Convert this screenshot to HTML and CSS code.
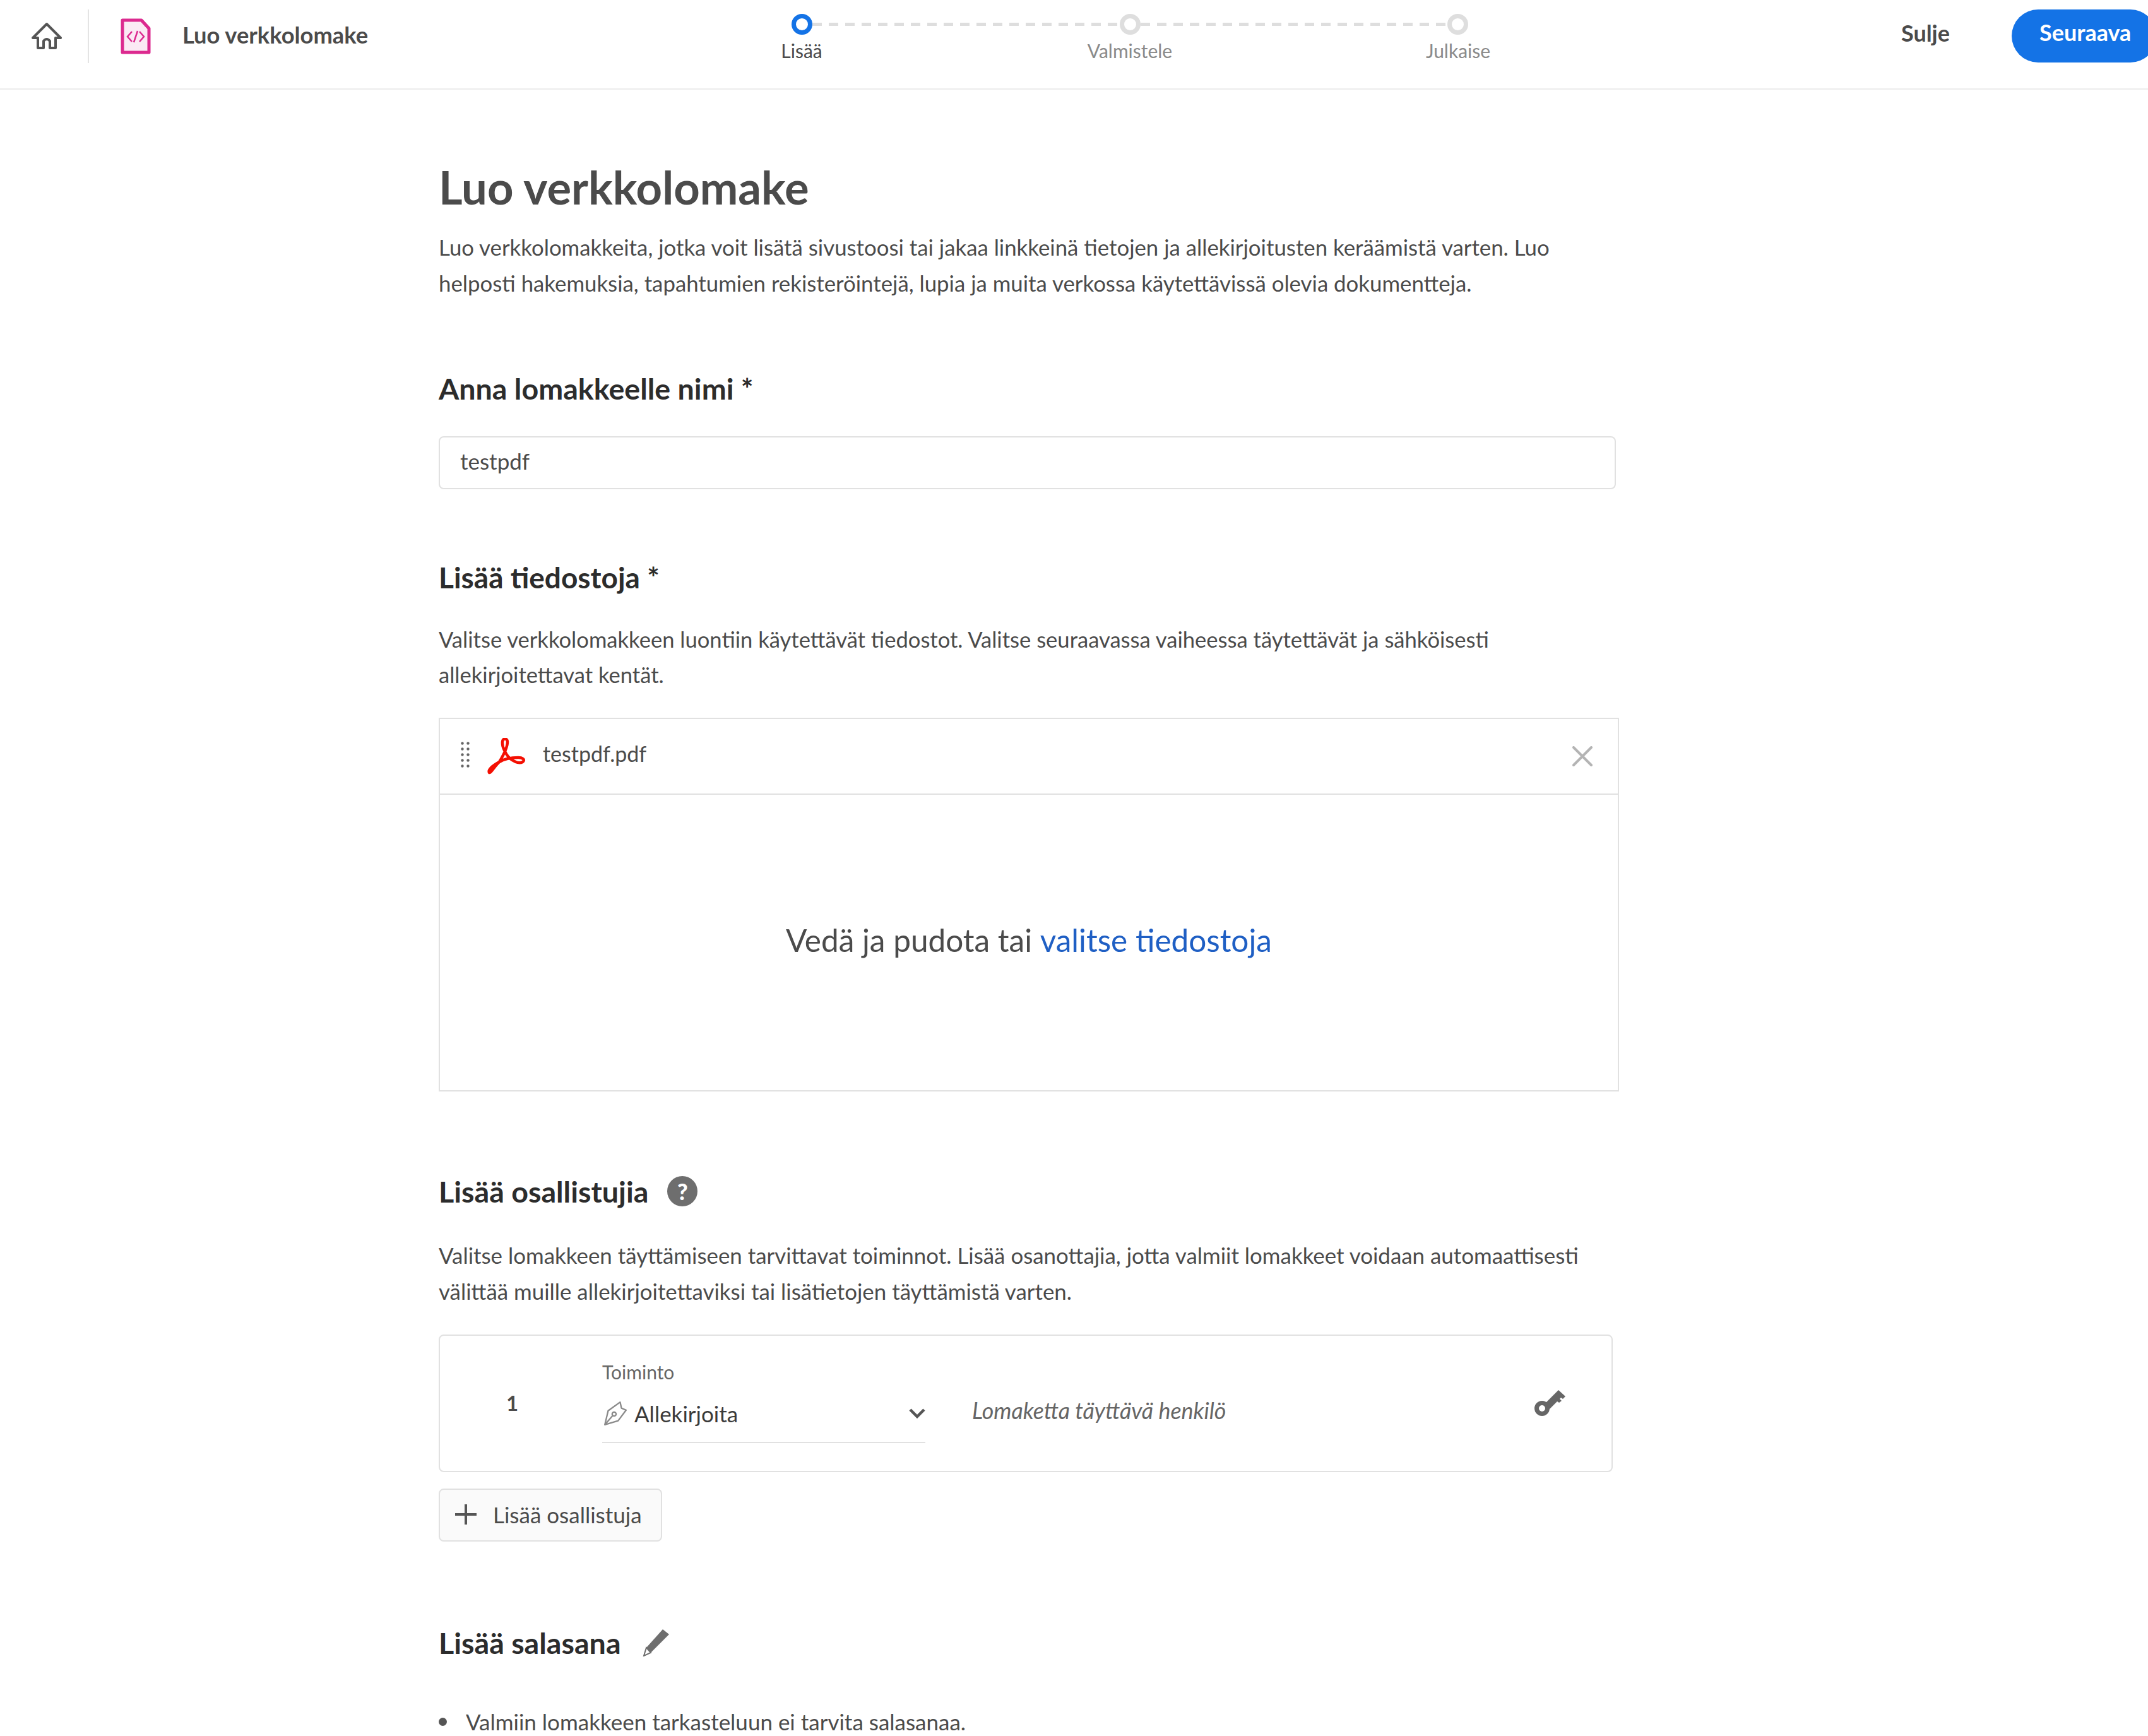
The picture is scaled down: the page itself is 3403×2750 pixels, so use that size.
FILE: index.html
```html
<!DOCTYPE html>
<html lang="fi">

<head>
  <meta charset="UTF-8">
  <title>Luo verkkolomake</title>
  <link rel="stylesheet" href="styles.css">
</head>

<body>
  <header class="topbar">
    <div class="topbar-left">
      <svg class="home-icon" viewBox="0 0 48 44" fill="none" stroke="#555" stroke-width="4" stroke-linejoin="round"><path d="M24 3 L46 25 L38 25 L38 41 L29 41 L29 30 Q24 24 19 30 L19 41 L10 41 L10 25 L2 25 Z"/></svg>
      <span class="divider"></span>
      <svg class="form-icon" viewBox="0 0 48 57"><path d="M3 3 H33 L45 16 V54 H3 Z" fill="#fbeaf4" stroke="#dc2a8f" stroke-width="5" stroke-linejoin="round"/><path d="M18 21 L11 29 L18 37 M30 21 L37 29 L30 37 M27 20 L21 38" fill="none" stroke="#dc2a8f" stroke-width="2.5"/></svg>
      <span class="app-title">Luo verkkolomake</span>
    </div>
    <div class="stepper">
      <div class="track">
        <span class="dot dot-active"></span>
        <span class="dash"></span>
        <span class="dot"></span>
        <span class="dash"></span>
        <span class="dot"></span>
      </div>
      <div class="step-labels">
        <span class="step-label step-current">Lisää</span>
        <span class="step-label">Valmistele</span>
        <span class="step-label">Julkaise</span>
      </div>
    </div>
    <div class="topbar-right">
      <span class="close-link">Sulje</span>
      <button class="next-btn">Seuraava</button>
    </div>
  </header>

  <main class="content">
    <h1>Luo verkkolomake</h1>
    <p class="intro">Luo verkkolomakkeita, jotka voit lisätä sivustoosi tai jakaa linkkeinä tietojen ja allekirjoitusten keräämistä varten. Luo<br>helposti hakemuksia, tapahtumien rekisteröintejä, lupia ja muita verkossa käytettävissä olevia dokumentteja.</p>

    <h2 class="name-title">Anna lomakkeelle nimi *</h2>
    <input class="name-input" type="text" value="testpdf">

    <h2 class="files-title">Lisää tiedostoja *</h2>
    <p class="section-text">Valitse verkkolomakkeen luontiin käytettävät tiedostot. Valitse seuraavassa vaiheessa täytettävät ja sähköisesti<br>allekirjoitettavat kentät.</p>

    <div class="file-box">
      <div class="file-row">
        <svg class="drag-icon" viewBox="0 0 14 42" fill="#666"><circle cx="2.5" cy="2.5" r="2.2"/><circle cx="11.5" cy="2.5" r="2.2"/><circle cx="2.5" cy="11.5" r="2.2"/><circle cx="11.5" cy="11.5" r="2.2"/><circle cx="2.5" cy="20.5" r="2.2"/><circle cx="11.5" cy="20.5" r="2.2"/><circle cx="2.5" cy="29.5" r="2.2"/><circle cx="11.5" cy="29.5" r="2.2"/><circle cx="2.5" cy="38.5" r="2.2"/><circle cx="11.5" cy="38.5" r="2.2"/></svg>
        <svg class="pdf-icon" viewBox="0 0 62 58" fill="none" stroke="#f40f02" stroke-width="4.5" stroke-linejoin="round"><path d="M4 55 C2 50 8 45 20 38 C28 25 33 14 33 6 C33 0 25 0 25 6 C24 14 30 25 36 32 C44 38 52 41 57 38 C62 34 56 31 50 31 C40 31 28 33 20 38 C12 45 7 56 4 55 Z"/></svg>
        <span class="file-name">testpdf.pdf</span>
        <svg class="remove-icon" viewBox="0 0 32 32" stroke="#b4b4b4" stroke-width="4" stroke-linecap="round"><path d="M2 2 L30 30 M30 2 L2 30"/></svg>
      </div>
      <div class="drop-zone">Vedä ja pudota tai <a class="browse-link">valitse tiedostoja</a></div>
    </div>

    <h2 class="people-title">Lisää osallistujia <span class="help-icon">?</span></h2>
    <p class="people-text">Valitse lomakkeen täyttämiseen tarvittavat toiminnot. Lisää osanottajia, jotta valmiit lomakkeet voidaan automaattisesti<br>välittää muille allekirjoitettaviksi tai lisätietojen täyttämistä varten.</p>

    <div class="role-card">
      <span class="role-num">1</span>
      <div class="role-select">
        <label>Toiminto</label>
        <div class="select-value">
          <svg class="pen-icon" viewBox="0 0 38 38" fill="none" stroke="#8a8a8a" stroke-width="2.2" stroke-linejoin="round"><path d="M27 2 L29 11 L36 14 L24 30 L4 36 L9 15 Z"/><path d="M4 36 L16 22"/><circle cx="18" cy="20" r="3"/></svg>
          <span class="select-text">Allekirjoita</span>
          <svg class="chevron" viewBox="0 0 26 16" fill="none" stroke="#555" stroke-width="4.5"><path d="M2 2 L13 13 L24 2"/></svg>
        </div>
      </div>
      <span class="role-placeholder">Lomaketta täyttävä henkilö</span>
      <svg class="key-icon" viewBox="0 0 50 44" fill="#666"><circle cx="12" cy="30" r="8.5" fill="none" stroke="#666" stroke-width="7"/><path d="M17 22 L38 1 L49 11 L45 15 L42 13 L40 15 L43 18 L39 21 L36 19 L24 31 Z"/></svg>
    </div>

    <button class="add-btn"><svg class="plus-icon" viewBox="0 0 34 32" stroke="#555" stroke-width="4"><path d="M0 16 H34 M17 0 V32"/></svg>Lisää osallistuja</button>

    <h2 class="password-title">Lisää salasana
      <svg class="pencil-icon" viewBox="0 0 44 44"><path d="M33 1 L43 9 L14 38 L3 43 L7 30 Z" fill="#6e6e6e"/><path d="M7 30 L3 43 L14 38 Z" fill="#fff" stroke="#6e6e6e" stroke-width="2"/></svg>
    </h2>
    <ul class="password-notes">
      <li>Valmiin lomakkeen tarkasteluun ei tarvita salasanaa.</li>
    </ul>
  </main>
</body>

</html>
```

FILE: styles.css
```css
html,
body {
  margin: 0;
  height: 2750px;
  overflow: hidden;
  background: #fff;
}

body {
  font-family: Lato, "Noto Sans", sans-serif;
  color: #4b4b4b;
}

.topbar {
  display: flex;
  height: 140px;
  border-bottom: 2px solid #ececec;
}

.topbar-left {
  width: 1010px;
  display: flex;
  align-items: center;
  padding-bottom: 26px;
  box-sizing: border-box;
}

.home-icon {
  width: 48px;
  height: 44px;
  margin-left: 50px;
  flex: none;
}

.divider {
  width: 2px;
  height: 85px;
  background: #e4e4e4;
  margin-left: 41px;
}

.form-icon {
  width: 48px;
  height: 57px;
  margin-left: 50px;
}

.app-title {
  font-size: 36.3px;
  font-weight: 700;
  margin: -5px 0 0 50px;
}

.stepper {
  width: 1560px;
  padding-top: 22px;
}

.track {
  display: flex;
  align-items: center;
  margin: 0 244px;
}

.dot {
  width: 33px;
  height: 33px;
  border: 7px solid #dedede;
  border-radius: 50%;
  box-sizing: border-box;
  flex: none;
}

.dot-active {
  border-color: #1473e6;
}

.dash {
  flex: 1;
  height: 5px;
  background: repeating-linear-gradient(90deg, #dedede 0 15px, transparent 15px 26px);
}

.step-labels {
  display: grid;
  grid-template-columns: repeat(3, 1fr);
  margin-top: 7px;
}

.step-label {
  text-align: center;
  font-size: 30px;
  line-height: 36px;
  color: #8a8a8a;
}

.step-current {
  color: #4b4b4b;
}

.topbar-right {
  flex: 1;
  display: flex;
  align-items: flex-start;
  justify-content: flex-end;
  margin-right: -14px;
}

.close-link {
  font-size: 36px;
  font-weight: 700;
  margin: 30px 98px 0 0;
}

.next-btn {
  width: 230px;
  height: 84px;
  margin-top: 15px;
  border: none;
  border-radius: 42px;
  background: #1473e6;
  color: #fff;
  font-family: inherit;
  font-size: 36px;
  font-weight: 700;
  padding: 0 30px 12px 44px;
  text-align: left;
}

.content {
  margin-left: 695px;
  width: 1870px;
}

h1 {
  font-size: 72.4px;
  font-weight: 700;
  line-height: 80px;
  margin: 114px 0 0;
}

p {
  margin: 0;
  font-size: 34.8px;
  line-height: 56.5px;
}

.intro {
  margin-top: 28px;
}

h2 {
  margin: 0;
  font-size: 46.6px;
  font-weight: 700;
  line-height: 56px;
  color: #2c2c2c;
  display: flex;
  align-items: center;
}

.name-title {
  margin-top: 110px;
}

.name-input {
  display: block;
  width: 1865px;
  height: 84px;
  box-sizing: border-box;
  margin-top: 48px;
  padding: 0 32px 6px;
  border: 2px solid #e1e1e1;
  border-radius: 8px;
  font-family: inherit;
  font-size: 35px;
  color: #4b4b4b;
}

.files-title {
  margin-top: 112px;
  font-size: 46px;
}

.section-text {
  margin-top: 41.5px;
  font-size: 34.6px;
}

.file-box {
  width: 1870px;
  height: 592px;
  box-sizing: border-box;
  margin-top: 39px;
  border: 2px solid #e1e1e1;
  display: flex;
  flex-direction: column;
}

.file-row {
  height: 120px;
  flex: none;
  display: flex;
  align-items: center;
  border-bottom: 2px solid #e1e1e1;
  box-sizing: border-box;
  padding: 0 40px 0 33px;
}

.drag-icon {
  width: 14px;
  height: 42px;
  margin-top: -4px;
}

.pdf-icon {
  width: 62px;
  height: 58px;
  margin-left: 27px;
}

.file-name {
  font-size: 34px;
  margin: -8px 0 0 27px;
}

.remove-icon {
  width: 32px;
  height: 32px;
  margin-left: auto;
}

.drop-zone {
  flex: 1;
  display: flex;
  align-items: center;
  justify-content: center;
  white-space: pre;
  font-size: 49.5px;
  padding-bottom: 8px;
}

.browse-link {
  color: #1f5fc4;
}

.people-title {
  margin-top: 130px;
}

.people-text {
  margin-top: 46.5px;
  font-size: 34.9px;
}

.help-icon {
  width: 48px;
  height: 48px;
  margin-left: 30px;
  border-radius: 50%;
  background: #6e6e6e;
  color: #fff;
  font-size: 36px;
  font-weight: 900;
  line-height: 48px;
  text-align: center;
}

.role-card {
  width: 1860px;
  height: 218px;
  box-sizing: border-box;
  margin-top: 40px;
  border: 2px solid #e1e1e1;
  border-radius: 8px;
  display: flex;
  align-items: center;
}

.role-num {
  width: 257px;
  padding: 0 0 3px 105px;
  box-sizing: border-box;
  font-size: 33px;
  font-weight: 700;
  flex: none;
}

.role-select {
  width: 512px;
  flex: none;
  margin-top: -5px;
}

.role-select label {
  display: block;
  font-size: 30px;
  line-height: 36px;
  color: #666;
}

.select-value {
  display: flex;
  align-items: center;
  height: 83px;
  box-sizing: border-box;
  padding-bottom: 9px;
  margin-top: 12px;
  border-bottom: 2px solid #e1e1e1;
}

.pen-icon {
  width: 40px;
  height: 40px;
  flex: none;
}

.select-text {
  font-size: 35px;
  margin-left: 11px;
  color: #3a3a3a;
}

.chevron {
  width: 26px;
  height: 16px;
  margin-left: auto;
}

.role-placeholder {
  font-style: italic;
  font-size: 35.8px;
  color: #666;
  margin-left: 74px;
  padding-top: 23px;
}

.key-icon {
  width: 50px;
  height: 44px;
  margin: 0 72px 0 auto;
}

.add-btn {
  display: flex;
  align-items: center;
  width: 354px;
  height: 84px;
  margin-top: 26px;
  padding: 0 0 3px 24px;
  box-sizing: border-box;
  border: 2px solid #e1e1e1;
  border-radius: 8px;
  background: #fafafa;
  color: #4b4b4b;
  font-family: inherit;
  font-size: 35px;
}

.plus-icon {
  width: 34px;
  height: 32px;
  margin-right: 26px;
  flex: none;
}

.password-title {
  margin-top: 132px;
}

.pencil-icon {
  width: 44px;
  height: 44px;
  margin-left: 33px;
}

.password-notes {
  margin: 69px 0 0;
  padding: 0;
  list-style: none;
  font-size: 35px;
  line-height: 56px;
}

.password-notes li {
  display: flex;
  align-items: center;
}

.password-notes li::before {
  content: "";
  width: 13px;
  height: 13px;
  margin-right: 30px;
  border-radius: 50%;
  background: #555;
}
```
